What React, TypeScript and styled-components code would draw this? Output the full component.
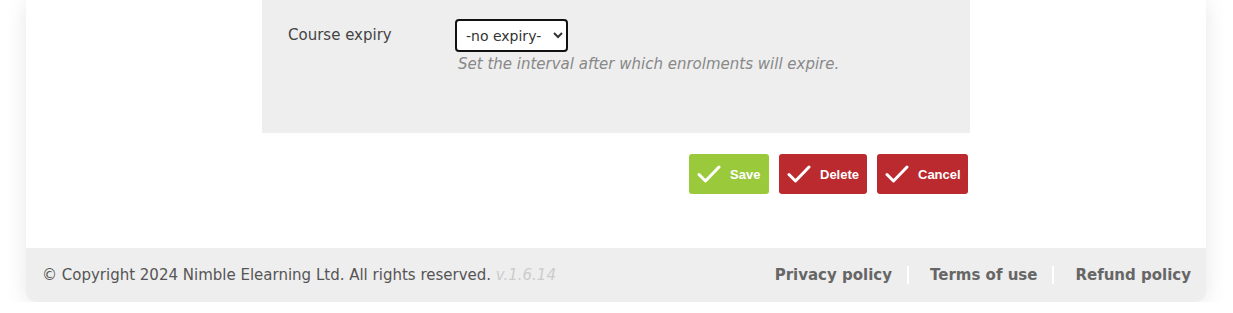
import React from "react";
import styled, { createGlobalStyle } from "styled-components";

const Global = createGlobalStyle`
  html, body { margin: 0; padding: 0; background: #fff; }
  body { font-family: "DejaVu Sans", Verdana, sans-serif; }
`;

const Card = styled.div`
  width: 1180px;
  margin: 0 0 0 26px;
  background: #fff;
  border-radius: 0 0 10px 10px;
  box-shadow: 0 2px 22px rgba(0, 0, 0, 0.1);
`;

const Main = styled.div`
  width: 708px;
  margin-left: 236px;
  padding-bottom: 54px;
`;

const Panel = styled.div`
  background: #eee;
  height: 133px;
  box-sizing: border-box;
  padding: 19px 0 0 26px;
`;

const FieldRow = styled.div`
  display: grid;
  grid-template-columns: 167px 1fr;
  align-items: start;
`;

const Label = styled.label`
  font-size: 15px;
  color: #444;
  padding-top: 7px;
`;

const FieldBody = styled.div`
  display: flex;
  flex-direction: column;
  align-items: flex-start;
`;

const Select = styled.select`
  height: 33px;
  width: 113px;
  border: 2px solid #111;
  border-radius: 4px;
  background: #fff;
  font-family: "DejaVu Sans", Verdana, sans-serif;
  font-size: 14px;
  color: #333;
  padding: 0 2px 0 5px;
  outline: none;
`;

const Help = styled.div`
  font-style: italic;
  font-size: 15px;
  color: #888;
  margin: 3px 0 0 3px;
`;

const Actions = styled.div`
  display: flex;
  justify-content: flex-end;
  gap: 10px;
  margin: 21px 2px 0 0;
`;

const Btn = styled.button<{ $tone: "green" | "red"; $w: number }>`
  display: flex;
  align-items: center;
  gap: 9px;
  height: 40px;
  width: ${(p) => p.$w}px;
  padding: 0 0 0 8px;
  border: none;
  border-radius: 3px;
  background: ${(p) => (p.$tone === "green" ? "#9aca3c" : "#bb2a2e")};
  color: #fff;
  font-family: "Liberation Sans", Arial, sans-serif;
  font-size: 13px;
  font-weight: bold;
  cursor: pointer;
`;

const Footer = styled.footer`
  background: #eee;
  height: 54px;
  border-radius: 0 0 10px 10px;
  display: flex;
  align-items: center;
  justify-content: space-between;
  padding: 0 15px 0 16px;
  box-sizing: border-box;
`;

const Copy = styled.div`
  font-size: 15px;
  color: #555;
`;

const Version = styled.span`
  font-style: italic;
  color: #ccc;
`;

const Links = styled.nav`
  display: flex;
  align-items: center;
`;

const Link = styled.a<{ $first?: boolean }>`
  font-size: 15px;
  font-weight: bold;
  color: #666;
  text-decoration: none;
  padding: 0 0 0 ${(p) => (p.$first ? 0 : 21)}px;
  margin-left: ${(p) => (p.$first ? 0 : 15)}px;
  border-left: ${(p) => (p.$first ? "none" : "2px solid #fff")};
  line-height: 18px;
`;

const Check = () => (
  <svg width="24" height="20" viewBox="0 0 24 20" fill="none">
    <path d="M2 10.5 L8.5 17 L22 3" stroke="#fff" strokeWidth="3" strokeLinecap="round" strokeLinejoin="round" />
  </svg>
);

export default function App() {
  return (
    <>
      <Global />
      <Card>
        <Main>
          <Panel>
            <FieldRow>
              <Label>Course expiry</Label>
              <FieldBody>
                <Select defaultValue="none">
                  <option value="none">-no expiry-</option>
                </Select>
                <Help>Set the interval after which enrolments will expire.</Help>
              </FieldBody>
            </FieldRow>
          </Panel>
          <Actions>
            <Btn $tone="green" $w={80}><Check />Save</Btn>
            <Btn $tone="red" $w={88}><Check />Delete</Btn>
            <Btn $tone="red" $w={91}><Check />Cancel</Btn>
          </Actions>
        </Main>
        <Footer>
          <Copy>© Copyright 2024 Nimble Elearning Ltd. All rights reserved. <Version>v.1.6.14</Version></Copy>
          <Links>
            <Link $first href="#">Privacy policy</Link>
            <Link href="#">Terms of use</Link>
            <Link href="#">Refund policy</Link>
          </Links>
        </Footer>
      </Card>
    </>
  );
}
